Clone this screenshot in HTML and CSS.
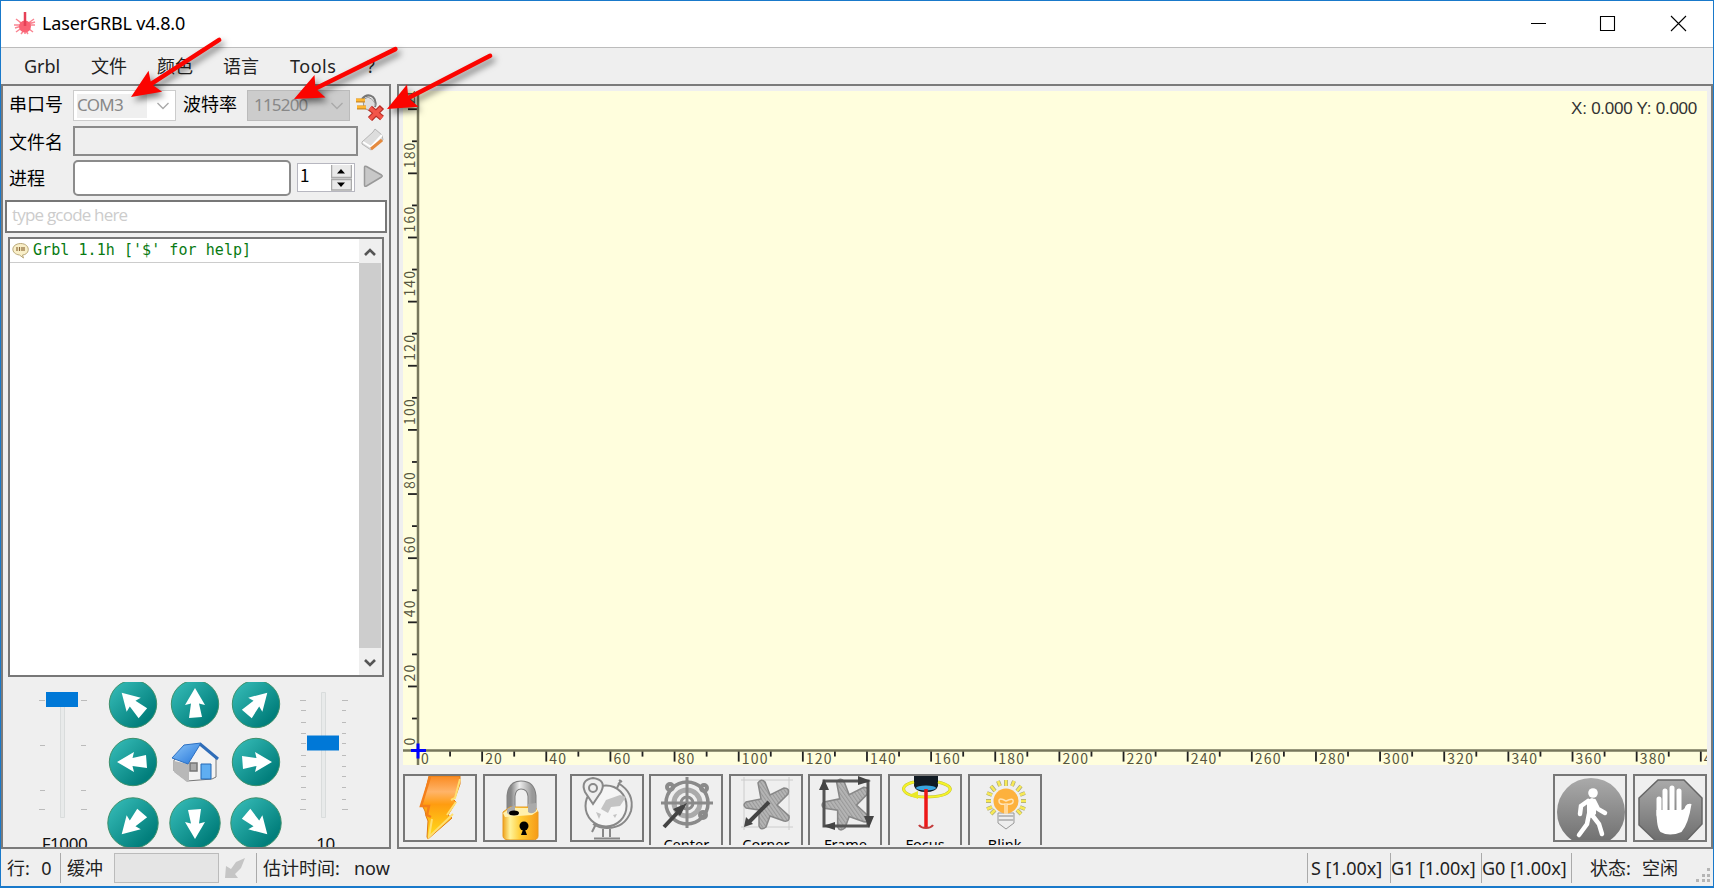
FILE: index.html
```html
<!DOCTYPE html>
<html lang="zh-CN">
<head>
<meta charset="utf-8">
<title>LaserGRBL v4.8.0</title>
<link rel="stylesheet" href="styles.css">
</head>
<body>
<svg width="0" height="0" class="defs">
  <defs>
    <linearGradient id="teal" x1="0" y1="0" x2="1" y2="1"><stop offset=".1" stop-color="#33b8b4"/><stop offset=".8" stop-color="#027f7c"/></linearGradient>
    <linearGradient id="steel" x1="0" y1="0" x2="1" y2="0"><stop offset="0" stop-color="#888"/><stop offset=".4" stop-color="#eee"/><stop offset="1" stop-color="#999"/></linearGradient>
    <linearGradient id="bolt" x1="0" y1="0" x2="0" y2="1"><stop offset="0" stop-color="#fa8a20"/><stop offset=".25" stop-color="#ffb469"/><stop offset=".45" stop-color="#ff9c10"/><stop offset="1" stop-color="#ffe21c"/></linearGradient>
    <linearGradient id="gold" x1="0" y1="0" x2="1" y2="0"><stop offset="0" stop-color="#efa31c"/><stop offset=".2" stop-color="#fff39a"/><stop offset=".5" stop-color="#ffcc35"/><stop offset="1" stop-color="#f69b16"/></linearGradient>
    <linearGradient id="grey" x1="0" y1="0" x2="0" y2="1"><stop offset="0" stop-color="#aaa"/><stop offset="1" stop-color="#6d6d6d"/></linearGradient>
    <linearGradient id="roof" x1="0" y1="0" x2="1" y2="1"><stop offset="0" stop-color="#8dc7fa"/><stop offset="1" stop-color="#2374d8"/></linearGradient>
    <pattern id="hatch" width="3" height="3" patternUnits="userSpaceOnUse" patternTransform="rotate(-35)"><rect width="3" height="3" fill="#b4b4b4"/><rect width="1" height="3" fill="#999"/></pattern>
    <symbol id="jog" viewBox="-26 -26 52 52" overflow="visible"><path d="M0-16L10 1 4-.5 7 13-6 14-4-.5-10 1z" fill="#fff"/></symbol>
    <symbol id="star" viewBox="0 0 48 48" overflow="visible"><path d="M15 4q3-5 7-1l5 13 14-7q6 0 4 6l-11 11 12 11q1 6-5 5l-14-5-4 11q-5 4-7-1l0-16-13-2q-4-3 0-6l15-3z" fill="url(#hatch)" stroke="#888" stroke-width="1.5"/></symbol>
  </defs>
</svg>
<div class="window">
  <header class="titlebar">
    <svg class="app-icon" width="24" height="24" viewBox="0 0 24 24"><g stroke="#f98592" stroke-width="1.500"><path d="M12 2v20M1 13h21M3 7l17 13M21 7L3 20M7 10l8 12M18 10L8 22M2 16l20-6"/></g><circle cx="12" cy="14.500" r="6" fill="#fa6274"/><path d="M12 0v14" stroke="#e64056" stroke-width="2.500"/></svg>
    <span class="title">LaserGRBL v4.8.0</span>
    <svg class="controls" width="158" height="20" viewBox="0 0 158 20"><path d="M0 9.500h15M69.500 2.500h14v14h-14zM140 2l15 15M155 2l-15 15" fill="none" stroke="#000" stroke-width="1.100"/></svg>
  </header>
  <nav class="menu"><span>Grbl</span><span>文件</span><span>颜色</span><span>语言</span><span class="wide">Tools</span><span>?</span></nav>
  <main class="work">
    <section class="panel left">
      <div class="row port">
        <label>串口号</label>
        <div class="combo com"><span>COM3</span><svg width="12" height="8" viewBox="0 0 12 8"><path d="M.5 1L6 6.500 11.500 1" fill="none" stroke="#aaa" stroke-width="1.400"/></svg></div>
        <label class="baud-label">波特率</label>
        <div class="combo baud"><span>115200</span><svg width="12" height="8" viewBox="0 0 12 8"><path d="M.5 1L6 6.500 11.500 1" fill="none" stroke="#aaa" stroke-width="1.400"/></svg></div>
        <svg class="plug" width="29" height="28" viewBox="0 0 29 28"><path d="M6 6q5-6 11-2 4 4 2 10" fill="none" stroke="#777" stroke-width="2"/><path d="M7 7l5-3q8 4 7 9l-5 5-6-3z" fill="#ddd" stroke="#999"/><path d="M0 7.500h9M1 14.500h9" stroke="#c78a2c" stroke-width="4"/><path d="M0 7h9M1 14h9" stroke="#ffb52e" stroke-width="2.400"/><path d="M14 15l12 10M26 14L14 26" stroke="#b92e26" stroke-width="6"/><path d="M14 15l12 10M25 15L14 26" stroke="#f25549" stroke-width="3.600"/></svg>
      </div>
      <div class="row file">
        <label>文件名</label><div class="textbox"></div>
        <svg width="24" height="24" viewBox="0 0 24 24"><path d="M1 14L12 4l2-3 7 6 1 5-12 10-9-6z" fill="#ddd" stroke="#b5b5b5"/><path d="M2 14l8 5L21 7" fill="none" stroke="#fff" stroke-width="2"/><path d="M10 21l11-9" stroke="#e58a3e" stroke-width="3"/></svg>
      </div>
      <div class="row run">
        <label>进程</label><div class="progress"></div>
        <div class="spin"><b>1</b><svg width="21" height="26" viewBox="0 0 21 26"><path d="M0 0h21v25.500H0z" fill="#e9e9e9"/><path d="M.5 0v12.500h20V0M.5 14.500v10.500h20V14.500z" fill="none" stroke="#aaa" stroke-width="1.500"/><path d="M6 8.500l4-4.500 4 4.500zM6 17.500l4 4.500 4-4.500z" fill="#000"/></svg></div>
        <svg width="20" height="23" viewBox="0 0 20 23"><path d="M1.500 2.500q0-2 2-1l15 8.500q1.500 1 0 2l-15 9q-2 1-2-1z" fill="#c8c8c8" stroke="#999" stroke-width="1.500"/></svg>
      </div>
      <div class="gcode">type gcode here</div>
      <div class="log">
        <div class="log-body"><div class="log-line"><svg width="17" height="17" viewBox="0 0 17 17"><path d="M8.500 1.500c10 0 10 11 2 11.500l1 3-4-3c-9-1-9-11 1-11.500z" fill="#f9efc8" stroke="#b9a878"/><path d="M5 5v4M7.500 5v4M10 5v4M12 5v4" stroke="#8e6b3a" stroke-width="1.200"/></svg><span>Grbl 1.1h ['$' for help]</span></div></div>
        <div class="scroll"><svg width="22" height="24" viewBox="0 0 22 24"><path d="M6 16l5-5 5 5" fill="none" stroke="#555" stroke-width="2.600"/></svg><div class="thumb"></div><svg width="22" height="27" viewBox="0 0 22 27"><path d="M6 12l5 5 5-5" fill="none" stroke="#555" stroke-width="2.600"/></svg></div>
      </div>
      <div class="jogging">
        <div class="slider">
          <svg width="54" height="147" viewBox="0 0 54 147"><path d="M25.500 10.500h4v125h-4z" fill="#e8eaea" stroke="#d9dcdc"/><path d="M4 18.500h6M46 18.500h6M5 63.500h5M46 63.500h5M5 108.500h5M46 108.500h5M4 127.500h6M46 127.500h6" stroke="#bbb"/><path d="M11 10h32v15H11z" fill="#0078d7"/></svg>
          <span>F1000</span>
        </div>
        <div class="jog-grid">
          <svg viewBox="-26 -22 52 52"><circle r="23.700" fill="url(#teal)" stroke="#3d8f6c"/><use href="#jog" x="-26" y="-26" width="52" height="52" transform="rotate(-45)"/></svg>
          <svg viewBox="-26 -22 52 52"><circle r="23.700" fill="url(#teal)" stroke="#3d8f6c"/><use href="#jog" x="-26" y="-26" width="52" height="52"/></svg>
          <svg viewBox="-26 -22 52 52"><circle r="23.700" fill="url(#teal)" stroke="#3d8f6c"/><use href="#jog" x="-26" y="-26" width="52" height="52" transform="rotate(45)"/></svg>
          <svg viewBox="-26 -28 52 52"><circle r="23.700" fill="url(#teal)" stroke="#3d8f6c"/><use href="#jog" x="-26" y="-26" width="52" height="52" transform="rotate(-90)"/></svg>
          <svg viewBox="-26 -28 52 52"><path d="M-21-2L-5-16 6-18 21-3v18l-4 2-25 2-13-10z" fill="#f3f3f3" stroke="#777"/><path d="M-21-1L-6 2v17l-2 1-13-10z" fill="#b8b8b8"/><path d="M-23-4L-11-17 6-19-7 2z" fill="url(#roof)" stroke="#2b6fc2"/><path d="M5-18L23-3" stroke="#2f6db8" stroke-width="3"/><path d="M-5 1h7v8h-7z" fill="#aaa" stroke="#777" stroke-width="1.500"/><path d="M6 2h10v15H6z" fill="#5faef2" stroke="#2568b5"/></svg>
          <svg viewBox="-26 -28 52 52"><circle r="23.700" fill="url(#teal)" stroke="#3d8f6c"/><use href="#jog" x="-26" y="-26" width="52" height="52" transform="rotate(90)"/></svg>
          <svg viewBox="-26 -29 52 52"><circle r="25.200" fill="url(#teal)" stroke="#3d8f6c"/><use href="#jog" x="-26" y="-26" width="52" height="52" transform="rotate(-135)"/></svg>
          <svg viewBox="-26 -29 52 52"><circle r="25.200" fill="url(#teal)" stroke="#3d8f6c"/><use href="#jog" x="-26" y="-26" width="52" height="52" transform="rotate(180)"/></svg>
          <svg viewBox="-26 -29 52 52"><circle r="25.200" fill="url(#teal)" stroke="#3d8f6c"/><use href="#jog" x="-26" y="-26" width="52" height="52" transform="rotate(135)"/></svg>
        </div>
        <div class="slider">
          <svg width="54" height="147" viewBox="0 0 54 147"><path d="M25.500 10.500h4v125h-4z" fill="#e8eaea" stroke="#d9dcdc"/><path d="M4 18.500h6M46 18.500h6M5 28.500h5M46 28.500h4M5 40.500h5M46 40.500h4M5 51.500h5M46 51.500h4M5 61.500h5M46 61.500h4M5 73.500h5M46 73.500h4M5 84.500h5M46 84.500h4M5 94.500h5M46 94.500h4M5 105.500h5M46 105.500h4M5 117.500h5M46 117.500h4M4 127.500h6M46 127.500h6" stroke="#bbb"/><path d="M11 53.500h32v15H11z" fill="#0078d7"/></svg>
          <span>10</span>
        </div>
      </div>
    </section>
    <section class="panel right">
      <div class="preview">
        <svg id="rulers" width="1304" height="674" viewBox="0 0 1304 674"></svg>
        <span class="coords">X: 0.000 Y: 0.000</span>
      </div>
      <div class="tools">
        <div class="tool"><svg viewBox="0 0 70 64"><path d="M24 0h31v8l-5 14-2 1 3 3-8 13 4 3-24 21-1-2 1-16-2-5-1-5-3-6z" fill="url(#bolt)" stroke="#e07a14"/><path d="M55 3l-5 19-4 2M51 26l-9 13M48 38L24 61l3-18" fill="none" stroke="#ffdf70" stroke-width="2"/><path d="M25 1l-9 29h8l-2 9 4 2" fill="none" stroke="#f47f1a" stroke-width="2.500"/></svg></div>
        <div class="tool"><svg viewBox="0 0 70 64"><path d="M26 33V20q1-11 10-11 10 0 11 11v15" fill="none" stroke="#808080" stroke-width="9"/><path d="M26 33V20q1-11 10-11 10 0 11 11v15" fill="none" stroke="url(#steel)" stroke-width="7"/><path d="M18 36l7-5h25l3 5v24q0 4-6 4H25q-7 0-7-4z" fill="url(#gold)" stroke="#e69a22"/><path d="M18 37l8-5h24l3 3-6 4-27 2z" fill="#fff0ad"/><path d="M22 33v4q4 4 8 0v-8M43 28v8q4 3 8-1v-8" fill="#aaa"/><ellipse cx="29" cy="37" rx="5" ry="2.500"/><circle cx="39" cy="50" r="4.500"/><path d="M39 51l-3 8h6z"/></svg></div>
        <div class="tool map"><svg viewBox="0 0 70 64" fill="none" stroke="#888" stroke-width="2"><circle cx="34" cy="30" r="20.500" fill="#f5f5f5"/><path d="M46 7q17 10 13 28-6 17-24 17-8 0-14-4M45 12l4-8M24 48l-4 8M47 4l3 2M31 53v8M38 53v8M22 62.500h26"/><path d="M29 33l5-9 14-5 6 2-6 9-9 1-3 6zM24 36l5 2-2 5zM41 39l4-1-2 4z" fill="#c3c3c3" stroke="none"/><path d="M21 28L13 16q-5-12 8-14 14 2 8 14z" fill="#eee"/><circle cx="21" cy="12" r="4"/></svg></div>
        <div class="tool labelled"><svg viewBox="0 0 70 64" fill="none" stroke="#8a8a8a"><circle cx="36" cy="27" r="21" stroke-width="3.500"/><circle cx="36" cy="27" r="13" stroke-width="5" stroke="#aaa"/><circle cx="36" cy="27" r="6" stroke-width="3"/><g stroke-width="4"><circle cx="19" cy="11" r="3"/><circle cx="53" cy="12" r="3"/><circle cx="52" cy="39" r="3"/><path d="M36 1v51M10 27h52" stroke-width="3"/></g><path d="M13 51l15-16" stroke="#444" stroke-width="4"/><path d="M36 27L22 33l7 7z" fill="#444" stroke="none"/></svg><span>Center</span></div>
        <div class="tool labelled"><svg viewBox="0 0 70 64"><path d="M10 4h52M10 51h52M13 1v53M58 1v53" stroke="#ccc"/><use href="#star" x="12" y="3" width="48" height="48"/><path d="M38 26L17 47" stroke="#444" stroke-width="4"/><path d="M13 51l2-10 7 7z" fill="#444"/></svg><span>Corner</span></div>
        <div class="tool labelled"><svg viewBox="0 0 70 64"><use href="#star" x="11" y="2" width="50" height="50"/><path d="M14 5h44v45H14z" fill="none" stroke="#555" stroke-width="3"/><path d="M14 3L9 14h10zM61 5L48 0v9zM59 52l-5-12h10zM13 50l12-4v8z" fill="#444"/></svg><span>Frame</span></div>
        <div class="tool labelled"><svg viewBox="0 0 70 64"><path d="M24 0h24v10q-2 6-12 6t-12-6z" fill="#111b24"/><ellipse cx="36" cy="12" rx="10" ry="2.500" fill="#39a5df"/><path d="M24 6c-18 4-12 15 12 15s34-10 12-15" fill="none" stroke="#c3c333" stroke-width="3"/><path d="M24 6c-18 4-12 15 12 15s34-10 12-15" fill="none" stroke="#f4f22a" stroke-width="2"/><path d="M19 19l9-4v8z" fill="#eae827"/><path d="M36 13v39" stroke="#ed1717" stroke-width="3.500"/><path d="M29 49q2 3 7 3 5 0 7-3" fill="none" stroke="#c33b3b" stroke-width="2.200"/></svg><span>Focus</span></div>
        <div class="tool labelled"><svg viewBox="0 0 70 64"><path d="M36 4v6M28 5l2 5M44 5l-2 5M21 10l4 5M51 10l-4 5M17 17l5 2M55 17l-5 2M16 25h5M51 25h5M17 33l5-2M55 33l-5-2M21 38l4-4M51 38l-4-4" stroke="#a5a57e" stroke-width="4"/><path d="M36 4v6M28 5l2 5M44 5l-2 5M21 10l4 5M51 10l-4 5M17 17l5 2M55 17l-5 2M16 25h5M51 25h5M17 33l5-2M55 33l-5-2M21 38l4-4M51 38l-4-4" stroke="#f7e955" stroke-width="2.600"/><path d="M28 37h16v10l-8 6-8-6z" fill="#eee" stroke="#999"/><circle cx="36" cy="25" r="12.500" fill="#fdb13d"/><path d="M35 38V28q-6 1-6-3t7 0q8-4 7 1-1 3-6 2v10" fill="none" stroke="#ffe3b5" stroke-width="1.500"/><path d="M28 40h16M28 44h16" stroke="#bbb" stroke-width="2"/></svg><span>Blink</span></div>
        <div class="tool walk"><svg viewBox="0 0 70 64"><circle cx="36" cy="36" r="34" fill="url(#grey)"/><circle cx="38" cy="17" r="4.800" fill="#fff"/><path d="M32 24l5-2 4 2v14l-5 4-4-3z" fill="#fff"/><path d="M33 25l-7 5-1 8M39 25l4 8 7 4M34 38l-2 10-8 11M37 39l7 9 3 10" fill="none" stroke="#fff" stroke-width="4.500" stroke-linecap="round"/></svg></div>
        <div class="tool stop"><svg viewBox="0 0 70 64"><path d="M23 4h26l18 18v26L50 66H22L4 49V22z" fill="url(#grey)" stroke="#666" stroke-width="1.500"/><path d="M24 39V23M30 34V15M37 34V12M44 34V15" stroke="#fff" stroke-width="5" stroke-linecap="round"/><path d="M21.500 34h25q3 0 4-4 2-3 6-2-3 20-10 28-12 5-21 0-4-4-4-22z" fill="#fff"/></svg></div>
      </div>
    </section>
  </main>
  <footer class="status">
    <span class="line">行:&nbsp; 0</span><span class="buffer">缓冲</span><div class="meter"></div>
    <svg width="23" height="22" viewBox="0 0 23 22"><path d="M21 1l-9 4-5 7-5-3-1 12h13l-3-4 6-6z" fill="#c5c5c5"/></svg>
    <span class="time">估计时间:</span><span class="now">now</span>
    <span class="ov s">S [1.00x]</span><span class="ov g1">G1 [1.00x]</span><span class="ov g0">G0 [1.00x]</span><span class="state">状态:</span><span class="idle">空闲</span>
    <svg class="grip" width="18" height="17" viewBox="0 0 18 17"><path d="M12 1h3v3h-3zM7 7h3v3H7zM12 7h3v3h-3zM1 12h3v3H1zM7 12h3v3H7zM12 12h3v3h-3z" fill="#b5b5b5"/></svg>
  </footer>
  <svg class="pointers" width="520" height="130" viewBox="0 0 520 130" fill="#fb0400" stroke="#fb0400">
    <g transform="translate(131 97) rotate(-32.900)"><path d="M24 0H105" stroke-width="4.500" stroke-linecap="round"/><path d="M0 0l29-12.500-4 10v5l4 10z" stroke="none"/></g>
    <g transform="translate(294 99) rotate(-26.200)"><path d="M24 0H113" stroke-width="4.500" stroke-linecap="round"/><path d="M0 0l29-12.500-4 10v5l4 10z" stroke="none"/></g>
    <g transform="translate(387 109) rotate(-27.300)"><path d="M24 0H116" stroke-width="4.500" stroke-linecap="round"/><path d="M0 0l29-12.500-4 10v5l4 10z" stroke="none"/></g>
  </svg>
</div>
<script src="rulers.js"></script>
</body>
</html>
```
FILE: styles.css
```css
* { box-sizing: border-box; }
body { margin: 0; overflow: hidden; background: #efefef; color: #111; font: 18px/24px "Noto Sans", "Noto Sans CJK SC", sans-serif; }
svg { display: block; flex: none; }
.defs { position: absolute; }
.window { position: relative; width: 1714px; height: 888px; border: 1px solid #1979ca; border-bottom-width: 2px; display: flex; flex-direction: column; }
.titlebar { height: 47px; background: #fff; border-bottom: 1px solid #bcbcbc; display: flex; align-items: center; padding: 0 19px 1px 12px; }
.title { margin-left: 5px; margin-top: -2px; color: #000; font-size: 18px; letter-spacing: -.15px; }
.controls { margin-left: auto; margin-right: 5px; }
.menu { height: 36px; display: grid; grid-template-columns: 67px 66px 66px 67px 77px 20px; padding: 6px 0 0 23px; color: #222; }
.menu .wide { letter-spacing: .5px; }
.work { height: 765px; display: flex; gap: 6px; }
.panel { border: 2px solid #7b7b7b; overflow: hidden; }
.left { width: 390px; padding: 4px 3px 0 2px; display: flex; flex-direction: column; }
.row { display: flex; font-family: "Noto Sans CJK SC", sans-serif; color: #000; padding-left: 4px; flex: none; }
.row label { width: 64px; line-height: 26px; }
.row.port { height: 36px; }
.combo { width: 103px; height: 31px; border: 1px solid #ccc; display: flex; align-items: center; justify-content: space-between; padding: 0 6px 0 3px; color: #888; font-family: "Noto Sans", sans-serif; }
.com { background: #fff; }
.com span { background: #efefef; width: 70px; height: 24px; line-height: 21px; font-size: 17px; letter-spacing: -.7px; }
.baud { background: #ccc; border-color: #bbb; padding-left: 6px; font-size: 17px; letter-spacing: -.8px; }
.baud span { margin-top: -2px; }
.row .baud-label { margin-left: 7px; width: 64px; }
.plug { margin: 3px 0 0 6px; }
.row.file { height: 34px; }
.row.file label { padding-top: 2px; }
.textbox { width: 285px; height: 30px; border: 2px solid #8b8b8b; margin-right: 3px; }
.row.file svg { margin-top: 2px; }
.row.run { height: 40px; }
.row.run label { padding-top: 4px; }
.progress { width: 218px; height: 36px; border: 2px solid #8b8b8b; border-radius: 5px; background: #fff; }
.spin { width: 58px; height: 29px; margin: 3px 8px 0 6px; border: 1px solid #b7b7c0; background: #fff; display: flex; justify-content: space-between; padding: 1px 2px 0 2px; }
.spin b { font-weight: 400; line-height: 20px; font-size: 17px; }
.row.run > svg { margin-top: 5px; }
.gcode { height: 33px; flex: none; border: 2px solid #777; background: #fff; color: #ccc; font: 17px/25px "Open Sans", sans-serif; letter-spacing: -.8px; padding-left: 5px; margin-right: -1px; }
.log { margin: 4px 2px 0 3px; height: 440px; flex: none; border: 2px solid #777; background: #fff; display: flex; }
.log-body { flex: 1; }
.log-line { height: 24px; border-bottom: 1px solid #ccc; display: flex; align-items: center; gap: 4px; padding: 0 0 1px 2px; color: #087a12; font: 15px/22px "DejaVu Sans Mono", monospace; letter-spacing: .06px; white-space: pre; }
.scroll { width: 23px; background: #efefef; display: flex; flex-direction: column; }
.thumb { flex: 1; background: #cdcdcd; margin-right: 1px; }
.jogging { height: 165px; margin-top: 5px; display: flex; flex: none; overflow: hidden; padding-left: 30px; }
.slider { width: 54px; }
.slider span { display: block; text-align: center; margin-top: 3px; margin-left: 5px; font-size: 17px; line-height: 24px; letter-spacing: -.4px; }
.jog-grid { width: 185px; margin-left: 18px; margin-right: 4px; display: grid; grid-template-columns: 61.500px 61.500px 61.500px; grid-template-rows: 52px 58px 60px; }
.jog-grid svg { width: 52px; height: 52px; overflow: visible; }
.jog-grid svg:nth-child(n+7) { margin-top: 2px; }
.right { width: 1316px; padding: 5px 4px 0; }
.preview { position: relative; width: 1304px; height: 674px; background: #fffedd; }
.coords { position: absolute; right: 10px; top: 6px; color: #333; font: 17px/24px "Liberation Sans", sans-serif; letter-spacing: -.25px; }
#rulers text { font: 14px "Noto Sans CJK SC", sans-serif; letter-spacing: 1.200px; fill: #55553f; }
.tools { display: flex; height: 80px; padding-top: 9px; overflow: hidden; }
.tool { width: 74px; height: 68px; margin-right: 5.600px; border: 2px solid #777; flex: none; overflow: hidden; }
.tool svg { width: 70px; height: 64px; }
.map { margin-left: 7.500px; }
.labelled { height: 90px; }
.labelled span { display: block; text-align: center; color: #000; font: 14.500px/16px "Noto Sans", sans-serif; margin-top: -4px; }
.walk { margin-left: auto; }
.stop { margin-right: 0; }
.status { height: 37px; display: flex; align-items: center; color: #222; white-space: nowrap; }
.status span { flex: none; height: 30px; line-height: 31px; }
.status .line { width: 60px; padding-left: 6px; border-right: 1px solid #aaa; word-spacing: 1px; }
.buffer { width: 53px; padding-left: 6px; }
.meter { width: 105px; height: 30px; border: 1px solid #bbb; background: #e5e5e5; margin-right: 5px; }
.status .time { border-left: 1px solid #aaa; margin-left: 9px; padding-left: 6px; width: 98px; }
.status .ov { border-left: 1px solid #aaa; font-size: 18px; letter-spacing: -.05px; }
.status .s { margin-left: auto; width: 83px; padding-left: 3px; }
.status .g1 { width: 91px; }
.status .g0 { width: 90px; }
.status .state { border-left: 1px solid #aaa; padding-left: 18px; width: 71px; }
.idle { width: 53px; }
.grip { margin-top: 15px; }
.pointers { position: absolute; left: -1px; top: -1px; filter: drop-shadow(3px 4px 3px rgba(0,0,0,.5)); pointer-events: none; }
```
FILE: rulers.js
```javascript
const svg = document.getElementById('rulers');
const ox = 15, oy = 659.6, step = 32.07;
let out = '';
for (let i = 0; i <= 40; i++) {
  const x = ox + i * step, major = i % 2 === 0;
  if (i) out += `<path d="M${x} ${oy}v${major ? 11 : 6}" stroke="#222" stroke-width="1.8"/>`;
  if (major) out += `<text x="${x + 3}" y="673">${i * 10}</text>`;
}
for (let i = 0; i <= 20; i++) {
  const y = oy - i * step, major = i % 2 === 0;
  if (i) out += `<path d="M${ox} ${y}h${major ? -10 : -6}" stroke="#222" stroke-width="1.8"/>`;
  if (major) out += `<text transform="translate(11.500 ${y - 5}) rotate(-90)">${i * 10}</text>`;
}
out += `<path d="M0 ${oy}H1304M${ox} 0V674" stroke="#77775c" stroke-width="2.500"/>`;
out += `<path d="M${ox - 7} ${oy}h15M${ox} ${oy - 7}v15" stroke="#00f" stroke-width="3"/>`;
svg.innerHTML = out;
```
